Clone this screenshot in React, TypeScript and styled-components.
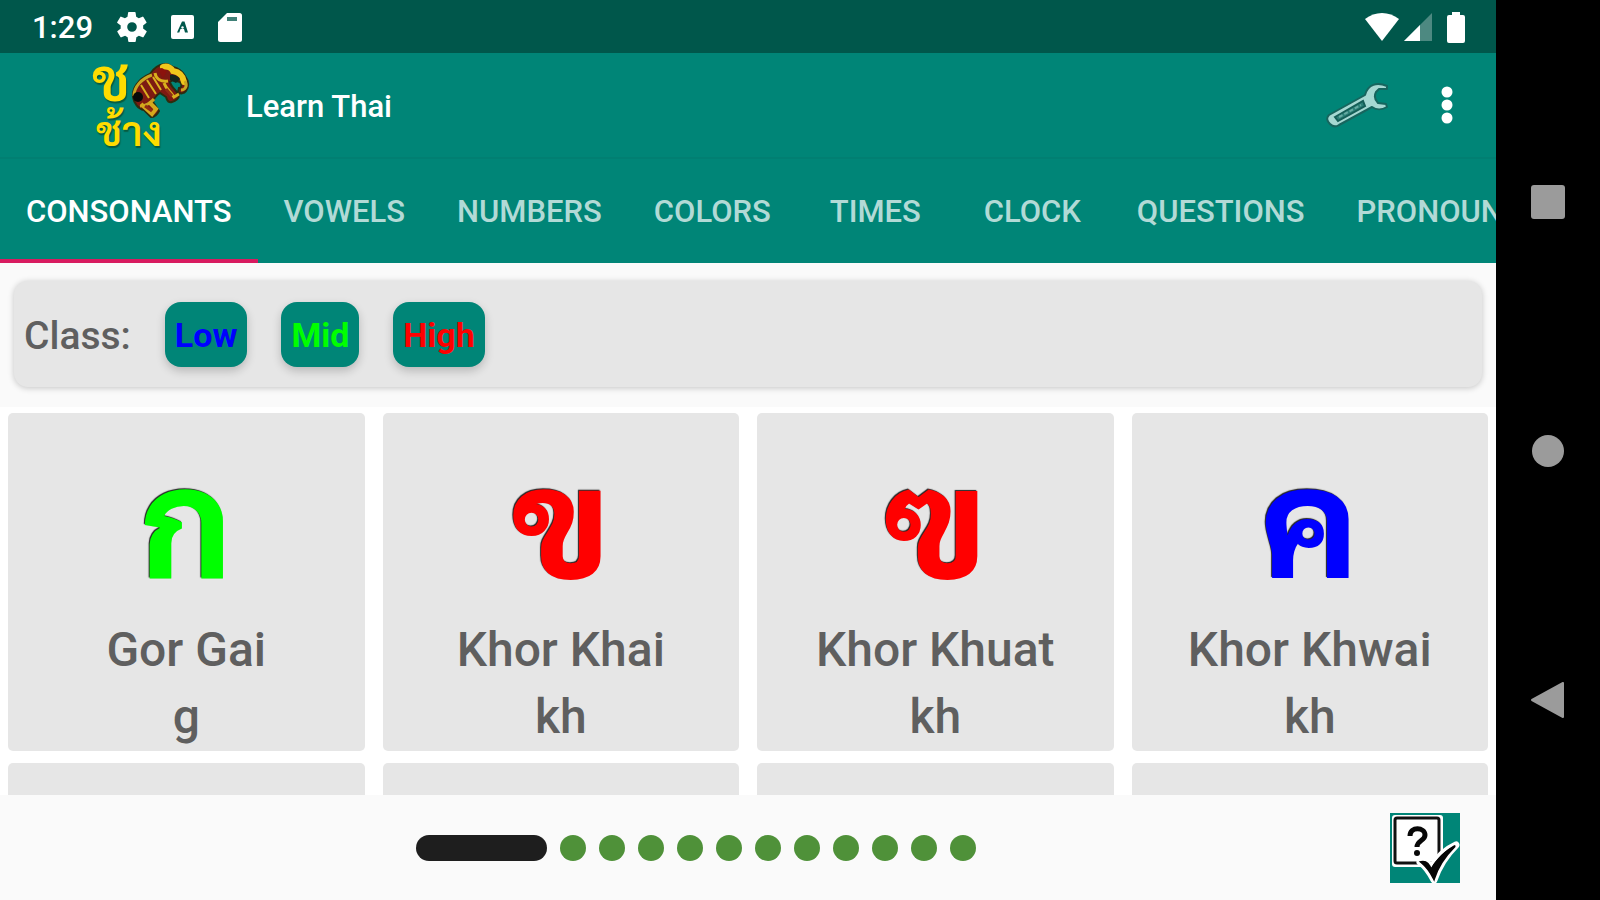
import React, { useState } from "react";
import styled, { createGlobalStyle } from "styled-components";

const GlobalStyle = createGlobalStyle`
  * { box-sizing: border-box; }
  body { margin: 0; background: #fafafa; }
  button { font: inherit; border: 0; padding: 0; background: none; cursor: pointer; }
`;

const thaiStack = `Sarabun, Loma, "Noto Sans Thai Looped", "Noto Sans Thai", "Noto Sans", sans-serif`;

const Device = styled.div`
  display: flex;
  height: 100vh;
  overflow: hidden;
  font-family: Roboto, "Liberation Sans", sans-serif;
  font-weight: 500;
`;

const Screen = styled.div`
  flex: 1;
  min-width: 0;
  display: flex;
  flex-direction: column;
  background: #fafafa;
`;

const StatusBar = styled.div`
  flex: none;
  height: 53px;
  padding: 1px 31px 0 32px;
  display: flex;
  align-items: center;
  justify-content: space-between;
  background: #00574b;
  color: #fff;
  font-size: 31px;
`;

const StatusGroup = styled.div<{ $gap: number }>`
  display: flex;
  align-items: center;
  gap: ${(p) => p.$gap}px;
`;

const Toolbar = styled.header`
  flex: none;
  height: 106px;
  padding: 0 10px 0 92px;
  display: flex;
  align-items: center;
  background: #008577;
  border-bottom: 2px solid #017f72;
  color: #fff;
`;

const Logo = styled.div`
  position: relative;
  width: 98px;
  height: 92px;
`;

const LogoLetter = styled.span`
  position: absolute;
  left: 0;
  top: 0;
  color: #ffdc00;
  font: 600 60px/34px ${thaiStack};
  text-shadow: 1px 2px 1px #075b3f;
`;

const LogoWord = styled.span`
  position: absolute;
  left: 4px;
  bottom: 2px;
  color: #ffdc00;
  font: 600 41px/40px ${thaiStack};
  text-shadow: 1px 2px 1px #075b3f;
`;

const LogoElephant = styled.svg`
  position: absolute;
  right: 0;
  top: 4px;
`;

const AppTitle = styled.h1`
  flex: 1;
  margin: 0 0 0 56px;
  padding-top: 4px;
  font-size: 31px;
  line-height: 40px;
  font-weight: 500;
`;

const IconButton = styled.button<{ $width: number }>`
  width: ${(p) => p.$width}px;
  height: 64px;
  display: flex;
  align-items: center;
  justify-content: center;
`;

const TabBar = styled.nav`
  flex: none;
  height: 104px;
  display: flex;
  overflow: hidden;
  background: #008577;
`;

const Tab = styled.button<{ $active: boolean }>`
  flex: none;
  min-width: 157px;
  padding: 6px 26px 0;
  border-bottom: 4px solid ${(p) => (p.$active ? "#d81b60" : "transparent")};
  color: ${(p) => (p.$active ? "#fff" : "#b2dad6")};
  font-size: 31px;
  line-height: 40px;
`;

const ClassCard = styled.section`
  flex: none;
  height: 106px;
  margin: 18px 14px 20px;
  padding: 0 10px;
  display: flex;
  align-items: center;
  gap: 34px;
  border-radius: 14px;
  background: #e6e6e6;
  box-shadow: 0 1px 6px rgba(0, 0, 0, 0.22);
`;

const ClassLabel = styled.span`
  padding-top: 4px;
  color: #5f5f5f;
  font-size: 39px;
  line-height: 48px;
`;

const Chip = styled.button<{ $color: string }>`
  height: 65px;
  padding: 2px 10px 0;
  border-radius: 16px;
  background: #008577;
  box-shadow: 0 4px 10px rgba(0, 0, 0, 0.2);
  color: ${(p) => p.$color};
  font-size: 34px;
  font-weight: 700;
`;

const Grid = styled.main`
  flex: 1;
  min-height: 0;
  overflow: hidden;
  padding: 6px 8px 0;
  display: grid;
  grid-template-columns: repeat(4, 1fr);
  grid-auto-rows: 338px;
  gap: 12px 18px;
  background: #fff;
`;

const LetterCard = styled.article`
  padding-top: 40px;
  display: flex;
  flex-direction: column;
  align-items: center;
  border-radius: 5px;
  background: #e6e6e6;
  color: #5f5f5f;
  font-size: 48px;
  line-height: 67px;
`;

const Letter = styled.div<{ $color: string }>`
  height: 163px;
  color: ${(p) => p.$color};
  font: 800 152px/124px ${thaiStack};
  text-shadow: -1px -1px 1px #222;
`;

const Footer = styled.footer`
  flex: none;
  height: 105px;
  padding: 0 36px 0 416px;
  display: flex;
  align-items: center;
  justify-content: space-between;
`;

const Pager = styled.div`
  display: flex;
  gap: 13px;
`;

const Dot = styled.button<{ $active: boolean }>`
  width: ${(p) => (p.$active ? 131 : 26)}px;
  height: 26px;
  border-radius: 13px;
  background: ${(p) => (p.$active ? "#1e1e1e" : "#4f9139")};
`;

const SystemNav = styled.aside`
  flex: none;
  width: 104px;
  padding: 77px 0 75px;
  display: flex;
  flex-direction: column;
  align-items: center;
  justify-content: space-around;
  background: #000;
`;

const tabs = ["CONSONANTS", "VOWELS", "NUMBERS", "COLORS", "TIMES", "CLOCK", "QUESTIONS", "PRONOUNS"];

const GREEN = "#00ff00";
const RED = "#ff0000";
const BLUE = "#0000ff";

const classes = [
  { name: "Low", color: BLUE },
  { name: "Mid", color: GREEN },
  { name: "High", color: RED },
];

const letters = [
  { thai: "ก", name: "Gor Gai", sound: "g", color: GREEN },
  { thai: "ข", name: "Khor Khai", sound: "kh", color: RED },
  { thai: "ฃ", name: "Khor Khuat", sound: "kh", color: RED },
  { thai: "ค", name: "Khor Khwai", sound: "kh", color: BLUE },
];

const Gear = () => (
  <svg width="30" height="30" viewBox="2 2 20 20" fill="#fff" aria-hidden="true">
    <path d="M19.4 13a7.5 7.5 0 0 0 0-2l2.1-1.6a.5.5 0 0 0 .1-.7l-2-3.4a.5.5 0 0 0-.6-.2l-2.5 1a7.3 7.3 0 0 0-1.7-1l-.4-2.6a.5.5 0 0 0-.5-.5h-4a.5.5 0 0 0-.5.4l-.4 2.7a7.7 7.7 0 0 0-1.7 1l-2.5-1a.5.5 0 0 0-.6.2l-2 3.4a.5.5 0 0 0 .1.7L4.5 11a7.9 7.9 0 0 0 0 2l-2.1 1.6a.5.5 0 0 0-.1.7l2 3.4c.1.2.4.3.6.2l2.5-1c.5.4 1.1.7 1.7 1l.4 2.6c0 .3.3.5.5.5h4c.3 0 .5-.2.5-.5l.4-2.6a7 7 0 0 0 1.7-1l2.5 1c.2.1.5 0 .6-.2l2-3.4a.5.5 0 0 0-.1-.7zM12 15.2a3.2 3.2 0 1 1 0-6.4 3.2 3.2 0 0 1 0 6.4z" />
  </svg>
);

const KeyboardBadge = () => (
  <svg width="23" height="24" viewBox="0 0 23 24" aria-hidden="true">
    <rect width="23" height="24" rx="2" fill="#fff" />
    <path d="M6 17.5 11 6.5h2.5L17 17.5h-3l-1-3.5H9.5l-1.2 3.5z" fill="#00574b" />
    <circle cx="11.5" cy="12.5" r="1.2" fill="#fff" />
  </svg>
);

const SdCard = () => (
  <svg width="24" height="29" viewBox="0 0 24 29" aria-hidden="true">
    <path d="M9 0h12.5A2.5 2.5 0 0 1 24 2.5v24a2.5 2.5 0 0 1-2.5 2.5h-19A2.5 2.5 0 0 1 0 26.5V9z" fill="#fff" />
    <path d="M9 4h10v4H9z" fill="#00574b" opacity=".75" />
  </svg>
);

const Elephant = () => (
  <LogoElephant width="60" height="58" viewBox="0 0 60 58" aria-hidden="true">
    <path
      d="M3 34C2 26 8 16 20 11 23 6 28 2 34 1c4-1 6 2 9 3 5 1 10 5 12 9 4 5 4 11 1 15-2 3-6 3-8 1l1-4c3 0 3-4 1-6l-7-2-3 2c1 5 6 8 9 13 0 3-3 6-7 7-3 1-5-1-6-5l-6-4c-3 2-6 5-7 9l6 9c-2 4-4 6-8 6l-7-7C8 46 4 40 3 34z"
      fill="#7d1a12"
      stroke="#2e2c0e"
      strokeWidth="2"
    />
    <path d="M4 33C4 24 11 16 22 12M24 36c-3 4-9 7-14 7" stroke="#c9a522" strokeWidth="3" fill="none" />
    <path d="m11 41 11 10 4-5-7-7" stroke="#d4a91c" strokeWidth="4" fill="none" />
    <path d="M33 4c5-2 9 2 10 4 6 1 10 5 11 11" stroke="#efc81c" strokeWidth="6" fill="none" strokeLinecap="round" />
    <path d="M55 18c3 5 0 9-4 9" stroke="#c9a522" strokeWidth="3" fill="none" />
    <path d="M25 10c1 6 6 9 13 8M34 20c2 6 6 8 10 14l5-3" stroke="#d9b01c" strokeWidth="3" fill="none" />
    <path d="m11 22 8 13M17 17l9 14M23 14l8 13" stroke="#dbb11f" strokeWidth="2" />
    <path d="m28 6 5 9 4-7-5-3z" fill="#8b130d" />
    <ellipse cx="8" cy="34" rx="5" ry="5" fill="#080b0a" />
    <path d="M40 12c4-1 8 1 10 4l-4 4-6-3z" fill="#13271d" />
    <path d="m15 43 7 5M36 26l6 7" stroke="#8f2b15" strokeWidth="3" />
  </LogoElephant>
);

const Wrench = () => (
  <svg width="64" height="48" viewBox="0 0 64 48" aria-hidden="true">
    <path
      d="M61 5C51 1 42 3 39 14L3 34c-3 3-2 6 1 9 3 3 6 3 9 1l33-18c4 3 10 3 15 0l-1-3-8-1c-3-3-4-7-2-11l3-3h8z"
      fill="#a5d8d2"
      stroke="#17655e"
      strokeWidth="2"
      strokeLinejoin="round"
    />
    <path d="M9 36 37 20l2 5-27 15z" fill="#2b8077" stroke="#155e57" strokeWidth="2" />
    <path d="m13 36 22-12" stroke="#65aaa2" strokeWidth="2" strokeDasharray="4 2" />
  </svg>
);

const Quiz = () => (
  <svg width="70" height="70" viewBox="0 0 70 70" aria-hidden="true">
    <path d="M0 0h70v70H0z" fill="#008577" />
    <rect x="2" y="2" width="51" height="52" rx="3" fill="#fff" />
    <rect x="5" y="5" width="44" height="45" rx="2" fill="#fff" stroke="#111" strokeWidth="3" />
    <path d="M20 23c0-10 15-9 15-1 0 6-8 5-8 12" fill="none" stroke="#080808" strokeWidth="5" />
    <circle cx="27" cy="40" r="3" fill="#080808" />
    <path
      d="M30 49c5-2 8 0 11 6 6-10 14-18 25-23-9 9-17 20-22 35-4-8-8-14-14-18z"
      fill="#050505"
      stroke="#fff"
      strokeWidth="7"
      paintOrder="stroke"
      strokeLinejoin="round"
    />
    <path d="M31 49c5-1 8 1 10 8 6-10 13-18 24-24-9 9-17 20-21 33-4-8-8-13-13-17z" fill="#050505" stroke="#050505" strokeWidth="2" />
  </svg>
);

export default function App() {
  const [page, setPage] = useState(0);
  return (
    <Device>
      <GlobalStyle />
      <Screen>
        <StatusBar>
          <StatusGroup $gap={24}>
            <span>1:29</span>
            <Gear />
            <KeyboardBadge />
            <SdCard />
          </StatusGroup>
          <StatusGroup $gap={4}>
            <svg width="34" height="28" viewBox="0 0 34 28" aria-hidden="true">
              <path d="M0 6C10-2 24-2 34 6L17 28z" fill="#fff" />
            </svg>
            <svg width="40" height="28" viewBox="-1 0 40 28" aria-hidden="true">
              <path d="M28 0v28H0z" fill="#4d8981" />
              <path d="M16 12v16H0z" fill="#fff" />
            </svg>
            <svg width="18" height="31" viewBox="0 0 18 31" aria-hidden="true">
              <path d="M5 0h8v3h3q2 0 2 2v24q0 2-2 2H2q-2 0-2-2V5q0-2 2-2h3z" fill="#fff" />
            </svg>
          </StatusGroup>
        </StatusBar>
        <Toolbar>
          <Logo>
            <LogoLetter lang="th">ช</LogoLetter>
            <LogoWord lang="th">ช้าง</LogoWord>
            <Elephant />
          </Logo>
          <AppTitle>Learn Thai</AppTitle>
          <IconButton $width={100} aria-label="Settings">
            <Wrench />
          </IconButton>
          <IconButton $width={78} aria-label="More options">
            <svg width="12" height="38" viewBox="0 0 12 38" fill="#fff" aria-hidden="true">
              <circle cx="6" cy="6" r="5.5" />
              <circle cx="6" cy="19" r="5.5" />
              <circle cx="6" cy="32" r="5.5" />
            </svg>
          </IconButton>
        </Toolbar>
        <TabBar>
          {tabs.map((tab, i) => (
            <Tab key={tab} $active={i === page} onClick={() => setPage(i)}>
              {tab}
            </Tab>
          ))}
        </TabBar>
        <ClassCard>
          <ClassLabel>Class:</ClassLabel>
          {classes.map((c) => (
            <Chip key={c.name} $color={c.color}>
              {c.name}
            </Chip>
          ))}
        </ClassCard>
        <Grid>
          {letters.map((l) => (
            <LetterCard key={l.name}>
              <Letter lang="th" $color={l.color}>
                {l.thai}
              </Letter>
              <div>{l.name}</div>
              <div>{l.sound}</div>
            </LetterCard>
          ))}
          {letters.map((l) => (
            <LetterCard key={`${l.name}-next`} />
          ))}
        </Grid>
        <Footer>
          <Pager>
            {Array.from({ length: 12 }, (_, i) => (
              <Dot key={i} $active={i === page} aria-label={`Page ${i + 1}`} onClick={() => setPage(i)} />
            ))}
          </Pager>
          <IconButton $width={70} aria-label="Quiz">
            <Quiz />
          </IconButton>
        </Footer>
      </Screen>
      <SystemNav>
        <IconButton $width={64} aria-label="Recent apps">
          <svg width="34" height="34" aria-hidden="true">
            <rect width="34" height="34" rx="3" fill="#9b9b9b" />
          </svg>
        </IconButton>
        <IconButton $width={64} aria-label="Home">
          <svg width="32" height="32" aria-hidden="true">
            <circle cx="16" cy="16" r="16" fill="#9b9b9b" />
          </svg>
        </IconButton>
        <IconButton $width={64} aria-label="Back">
          <svg width="34" height="36" aria-hidden="true">
            <path d="M32 1v34L1 18z" fill="#9b9b9b" stroke="#9b9b9b" strokeWidth="2" strokeLinejoin="round" />
          </svg>
        </IconButton>
      </SystemNav>
    </Device>
  );
}
